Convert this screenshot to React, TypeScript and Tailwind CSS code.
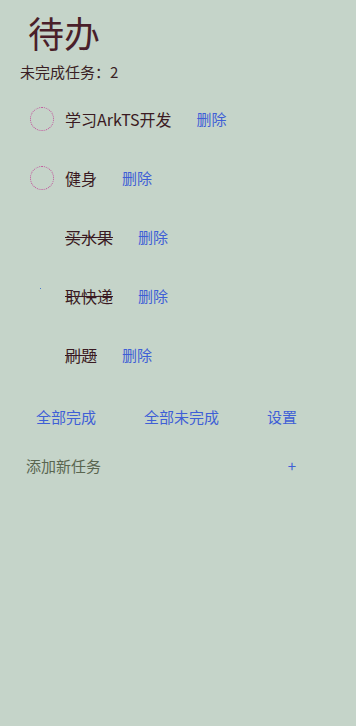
import React from "react";

const items = [
  { name: "学习ArkTS开发", done: false },
  { name: "健身", done: false },
  { name: "买水果", done: true },
  { name: "取快递", done: true, dot: true },
  { name: "刷题", done: true },
];

export default function App() {
  return (
    <div
      className="w-[356px] h-[726px] bg-[#c5d4c9] flex flex-col"
      style={{ fontFamily: '"Noto Sans CJK SC", "Noto Sans", sans-serif' }}
    >
      <div className="pl-[28px] pt-[8px] text-[36px] leading-[48px] text-[#4a1f2a]">待办</div>
      <div className="pl-[20px] mt-[6px] text-[15px] leading-[20px] text-[#3a1f24]">未完成任务：2</div>
      <div className="flex flex-col mt-[7px]">
        {items.map((it, i) => (
          <div key={i} className="h-[59px] flex items-center pl-[30px]">
            <div className="w-[24px] h-[24px] relative">
              {!it.done && (
                <div className="w-[24px] h-[24px] rounded-full border border-dotted border-[#c0509a]" />
              )}
              {it.dot && <div className="absolute left-[10px] top-[4px] w-[1px] h-[1px] bg-[#4a7ad0]" />}
            </div>
            <span
              className={
                "ml-[11px] text-[16px] leading-[22px] text-[#3a1a22] " +
                (it.done ? "line-through decoration-[#3a1a22]" : "")
              }
            >
              {it.name}
            </span>
            <span className="ml-[25px] text-[15px] leading-[20px] text-[#3f5fd6]">删除</span>
          </div>
        ))}
      </div>
      <div className="flex mt-[19px] h-[28px] items-center text-[15px] text-[#3f5fd6]">
        <span className="ml-[36px]">全部完成</span>
        <span className="ml-[48px]">全部未完成</span>
        <span className="ml-[48px]">设置</span>
      </div>
      <div className="flex items-center mt-[23px] h-[24px]">
        <span className="ml-[26px] text-[15px] text-[#5a6650]">添加新任务</span>
        <span className="ml-auto mr-[60px] text-[15px] text-[#3f5fd6]">+</span>
      </div>
    </div>
  );
}
